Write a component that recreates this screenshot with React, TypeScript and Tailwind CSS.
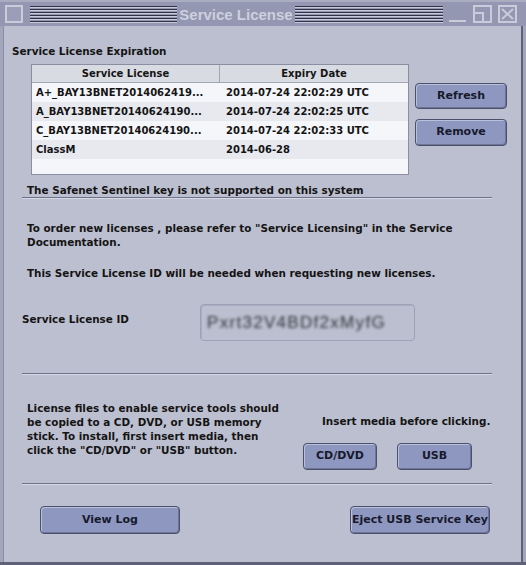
import React from "react";

const rows = [
  ["A+_BAY13BNET2014062419...", "2014-07-24 22:02:29 UTC"],
  ["A_BAY13BNET20140624190...", "2014-07-24 22:02:25 UTC"],
  ["C_BAY13BNET20140624190...", "2014-07-24 22:02:33 UTC"],
  ["ClassM", "2014-06-28"],
  ["", ""],
];

function Stripes({ className }: { className: string }) {
  return (
    <div className={`flex flex-col gap-[1px] ${className}`}>
      {[0, 1, 2, 3, 4, 5].map((i) => (
        <div key={i} className="flex flex-col">
          <div className="h-[1px] bg-[#2f3249]" />
          <div className="h-[1px] bg-[#c7cad9]" />
        </div>
      ))}
    </div>
  );
}

function Btn({ className, children }: { className: string; children: React.ReactNode }) {
  return (
    <div
      className={`flex items-center justify-center rounded-[4px] border border-[#4c516b] bg-[#8e97c0] shadow-[inset_1px_1px_0_#b9c0dc,inset_-1px_-1px_0_#6d7498] text-[11px] font-bold text-[#171a2c] font-['DejaVu_Sans',sans-serif] ${className}`}
    >
      {children}
    </div>
  );
}

function Sep() {
  return (
    <div className="ml-[18px] w-[470px] border-t border-b border-t-[#6d7189] border-b-[#d6d9e4]" />
  );
}

export default function App() {
  return (
    <div className="w-[526px] h-[565px] bg-[#9a9eb6] flex flex-col overflow-hidden font-['DejaVu_Sans',sans-serif] text-[10.4px] font-bold text-[#141414]">
      {/* title bar */}
      <div className="h-[26px] shrink-0 bg-[#9397b1] border-t-2 border-[#a9adc2] flex items-center">
        <div className="ml-[5px] w-[18px] h-[18px] border-2 border-[#c9ccda] bg-[#9a9eb8]" />
        <Stripes className="ml-[7px] w-[147px]" />
        <div className="w-[118px] text-center font-['Liberation_Sans',sans-serif] text-[15px] font-bold text-[#cdd0de] leading-none">
          Service License
        </div>
        <Stripes className="w-[148px]" />
        <svg className="ml-[5px]" width="19" height="18" viewBox="0 0 19 18">
          <rect x="1" y="15" width="17" height="2" fill="#c9ccda" />
        </svg>
        <svg className="ml-[6px]" width="19" height="18" viewBox="0 0 19 18">
          <rect x="1" y="1" width="17" height="16" fill="none" stroke="#c9ccda" strokeWidth="2" />
          <path d="M1 8 H10 V17" fill="none" stroke="#c9ccda" strokeWidth="2" />
        </svg>
        <svg className="ml-[6px]" width="19" height="18" viewBox="0 0 19 18">
          <rect x="1" y="1" width="17" height="16" fill="none" stroke="#c9ccda" strokeWidth="2" />
          <path d="M4 4 L15 14 M15 4 L4 14" fill="none" stroke="#c9ccda" strokeWidth="2" />
        </svg>
      </div>

      <div className="flex flex-1">
        <div className="w-[4px] bg-[#a2a6bb] border-r border-[#8a8ea6]" />
        <div className="w-[517px] bg-[#bcbfcf] flex flex-col">
          <div className="ml-[8px] mt-[18px] leading-[14px]">Service License Expiration</div>

          <div className="flex mt-[6px] ml-[27px]">
            <div className="w-[378px] h-[111px] border border-[#8b8ea3] bg-[#f4f5f8] flex flex-col overflow-hidden text-[10px]">
              <div className="h-[18px] shrink-0 flex bg-[#d9dbe3] border-b border-[#a2a5b6]">
                <div className="w-[188px] border-r border-[#a2a5b6] flex items-center justify-center">Service License</div>
                <div className="flex-1 flex items-center justify-center">Expiry Date</div>
              </div>
              {rows.map((r, i) => (
                <div
                  key={i}
                  className={`h-[19px] shrink-0 flex items-center ${i % 2 === 0 ? "bg-[#f5f6f9]" : "bg-[#e8e9ef]"}`}
                >
                  <div className="w-[188px] pl-[4px] whitespace-nowrap">{r[0]}</div>
                  <div className="pl-[6px] whitespace-nowrap">{r[1]}</div>
                </div>
              ))}
            </div>
            <div className="ml-[6px] flex flex-col">
              <Btn className="mt-[19px] w-[92px] h-[26px]">Refresh</Btn>
              <Btn className="mt-[10px] w-[92px] h-[27px]">Remove</Btn>
            </div>
          </div>

          <div className="ml-[23px] mt-[8px] leading-[14px]">The Safenet Sentinel key is not supported on this system</div>
          <Sep />

          <div className="ml-[23px] mt-[22px] leading-[14px]">
            To order new licenses , please refer to "Service Licensing" in the Service
            <br />
            Documentation.
          </div>
          <div className="ml-[23px] mt-[17px] leading-[14px]">
            This Service License ID will be needed when requesting new licenses.
          </div>

          <div className="flex mt-[24px] ml-[18px]">
            <div className="mt-[8px] leading-[14px] w-[178px]">Service License ID</div>
            <div className="w-[215px] h-[37px] rounded-[4px] border border-[#9ea2b7] shadow-[inset_1px_1px_0_#a9adc1] flex items-center pl-[6px]">
              <span className="font-['Liberation_Sans',sans-serif] font-normal text-[17px] tracking-[1.3px] text-[#33343d] blur-[1.4px] whitespace-nowrap">
                Pxrt32V4BDf2xMyfG
              </span>
            </div>
          </div>

          <div className="mt-[32px]">
            <Sep />
          </div>

          <div className="flex mt-[26px] ml-[23px]">
            <div className="w-[276px] leading-[14px] whitespace-nowrap">
              License files to enable service tools should
              <br />
              be copied to a CD, DVD, or USB memory
              <br />
              stick. To install, first insert media, then
              <br />
              click the "CD/DVD" or "USB" button.
            </div>
            <div className="flex flex-col">
              <div className="ml-[19px] mt-[13px] leading-[14px] whitespace-nowrap">Insert media before clicking.</div>
              <div className="flex mt-[15px]">
                <Btn className="w-[74px] h-[27px]">CD/DVD</Btn>
                <Btn className="ml-[20px] w-[75px] h-[27px]">USB</Btn>
              </div>
            </div>
          </div>

          <div className="mt-[13px]">
            <Sep />
          </div>

          <div className="flex mt-[21px] ml-[36px]">
            <Btn className="w-[140px] h-[28px]">View Log</Btn>
            <Btn className="ml-[170px] w-[140px] h-[28px]">Eject USB Service Key</Btn>
          </div>
        </div>
        <div className="w-[5px] bg-[#a2a6bb] border-l-2 border-[#5e6279]" />
      </div>
      <div className="h-[3px] shrink-0 bg-[#5e6279]" />
    </div>
  );
}
